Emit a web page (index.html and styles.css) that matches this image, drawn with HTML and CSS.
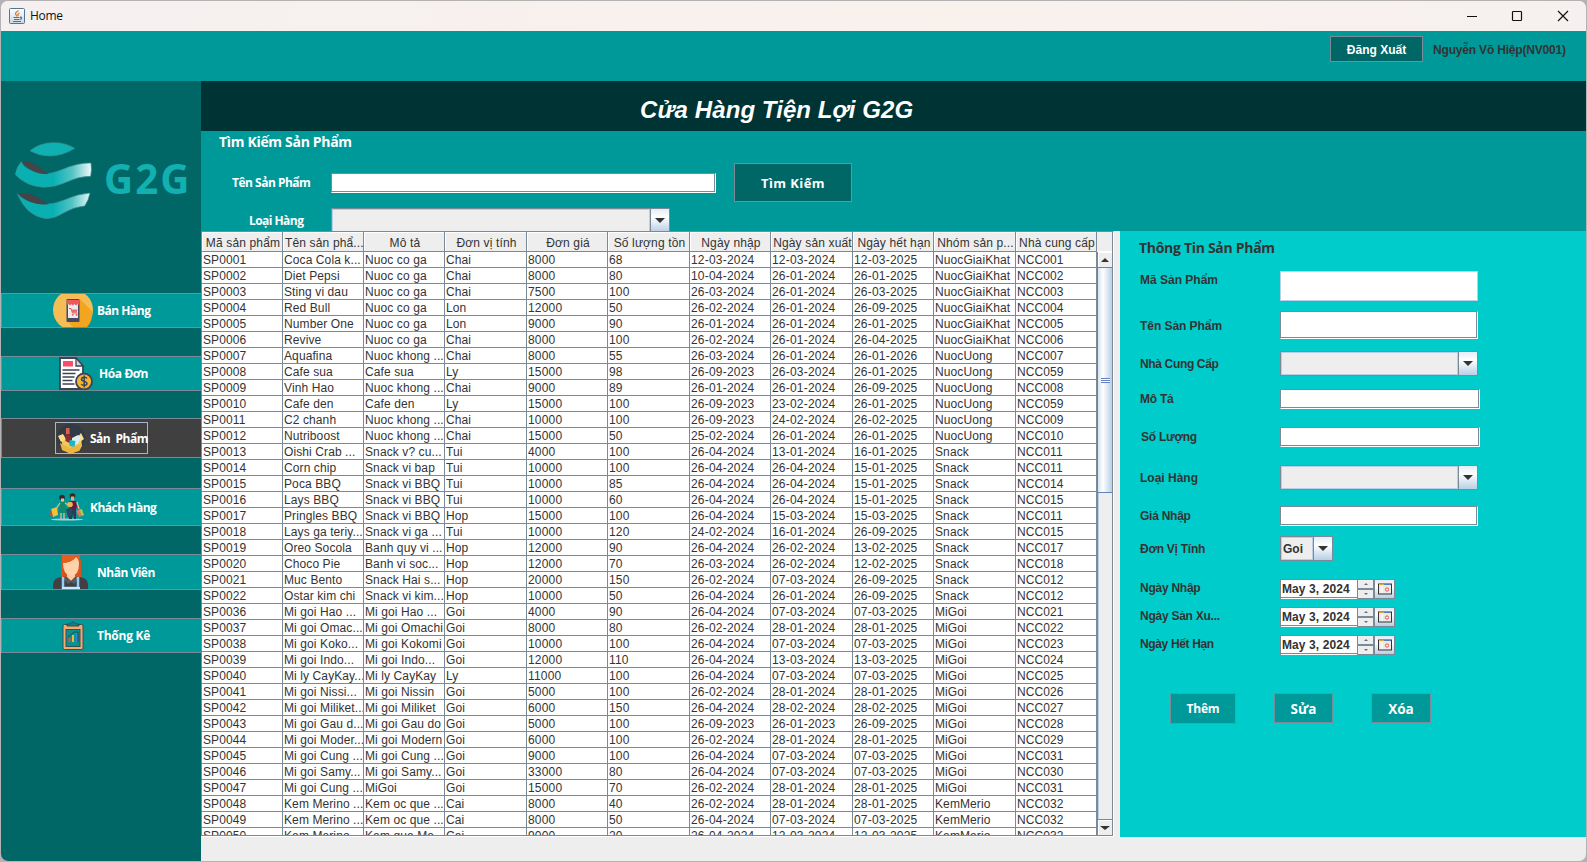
FILE: index.html
```html
<!DOCTYPE html>
<html lang="vi">
<head>
<meta charset="utf-8">
<title>Home</title>
<link rel="stylesheet" href="styles.css">
</head>
<body>
<div class="window">
  <header class="titlebar">
    <svg class="java" width="16" height="16" viewBox="0 0 16 16"><defs><linearGradient id="jv" x2="0" y2="1"><stop offset="0" stop-color="#fff"/><stop offset="1" stop-color="#c9d9e6"/></linearGradient></defs><rect x=".5" y=".5" width="15" height="15" rx="1" fill="url(#jv)" stroke="#55768f"/><path d="M9.5 2.5C5.5 5 6 5.500 8 8.500M10.500 5c-2.500 1.500-2 2-1 3" fill="none" stroke="#e87722" stroke-width="1.300"/><path d="M4.500 9.500h6M5 11.500h5.500M4 13.500h8M11 9.300c2.200-.5 2.200 1.500 0 2" fill="none" stroke="#4f7390" stroke-width="1.200"/></svg>
    <span class="title">Home</span>
    <svg class="winbtns" width="106" height="14" viewBox="0 0 106 14" fill="none" stroke="#111" stroke-width="1"><path d="M1 7.500h10"/><rect x="46.500" y="2.500" width="9" height="9" rx=".8" stroke-width="1.200"/><path d="M92 2l10 10M102 2L92 12" stroke-width="1.200"/></svg>
  </header>
  <div class="topbar">
    <button class="btn logout">Đăng Xuất</button>
    <span class="user">Nguyễn Võ Hiệp(NV001)</span>
  </div>
  <div class="body">
    <nav class="sidebar">
      <svg class="logo" width="177" height="80" viewBox="42 424 531 240">
        <defs>
          <linearGradient id="ga" x1="45" x2="275" y1="0" y2="0" gradientUnits="userSpaceOnUse"><stop offset=".5" stop-color="#08b0b2"/><stop offset=".75" stop-color="#56c4c5"/><stop offset="1" stop-color="#f4fafa"/></linearGradient>
        </defs>
        <g stroke="#3f8f8c" stroke-width="2">
          <path d="M90 453Q120 429 160 429Q198 429 224 446Q190 468 150 469Q117 469 90 453Z" fill="#0fb0b1"/>
          <path d="M64 486Q72 510 125 523Q150 524 185 510Q235 488 273 490Q276 510 272 530Q235 530 200 547Q165 563 130 563Q80 560 46 525Q50 500 64 486Z" fill="url(#ga)"/>
          <path d="M64 485Q90 482 110 497Q126 511 146 522Q125 526 102 515Q78 503 64 485Z" fill="#444548" stroke="none"/>
          <path d="M52 582Q78 609 125 614Q160 615 195 600Q235 582 270 580Q266 602 254 619Q220 622 190 640Q165 657 138 657Q80 650 52 582Z" fill="url(#ga)"/>
          <path d="M52 581Q85 577 108 590Q125 602 146 613Q118 617 92 607Q68 598 52 581Z" fill="#444548" stroke="none"/>
        </g>
        <text class="logotext" x="312" y="582" textLength="256">G2G</text>
      </svg>
      <button class="nav n1">
        <svg width="40" height="33" viewBox="0 0 40 33"><circle cx="20" cy="16" r="20" fill="#f6bd57"/><path d="M27 5L39 17Q40 27 34 33H20L14 27Z" fill="#f4a51f"/><rect x="13.500" y="5" width="13" height="23" rx="1" fill="#47495f"/><rect x="15" y="8" width="10" height="16" fill="#e9ecef"/><path d="M14 6h12v5l-1.500-1-1.500 1.500-1.500-1.500-1.500 1.500-1.500-1.500-1.500 1.500-1.500-1.500-1.500 1z" fill="#f0585a"/><path d="M16 14.500h2l1.500 4.500h5" stroke="#e8505b" fill="none"/><path d="M18.500 15.500h6l-.8 3h-4.500z" fill="#f06a6a"/><circle cx="19.800" cy="20.800" r=".9" fill="#e8505b"/><circle cx="23.500" cy="20.800" r=".9" fill="#e8505b"/></svg>
        <span>Bán Hàng</span></button>
      <button class="nav n2">
        <svg width="36" height="33" viewBox="0 0 36 33"><path d="M2 1h16l7 8v23H2z" fill="#fff" stroke="#3d4356" stroke-width="1.800"/><path d="M18 1v8h7z" fill="#cfd6e0" stroke="#3d4356" stroke-width="1.300"/><rect x="5" y="4" width="10" height="5.500" fill="#fa4d6c"/><path d="M4.500 13h17M4.500 16.500h13M4.500 20h12M4.500 23.500h10M4.500 27h12" stroke="#3d4356" stroke-width="1.500"/><circle cx="26" cy="24.500" r="8" fill="#f6b52e" stroke="#3d4356" stroke-width="1.800"/><path d="M29 21.500c-1-2-5.500-1.500-5.500.8 0 2.700 5.500 1.500 5.500 4.200 0 2.200-4.500 2.700-5.700.5M26.200 18.500v12" fill="none" stroke="#3d4356" stroke-width="1.500"/></svg>
        <span>Hóa Đơn</span></button>
      <button class="nav n3">
        <span class="focus">
        <svg width="28" height="30" viewBox="0 0 28 30"><circle cx="14" cy="14" r="14" fill="#313b47"/><path d="M4 12l5 3 9 2 6-4 1 9-3 5-8 2-8-3z" fill="#f4c660"/><path d="M1 12l5-2 3 5-5 3zM24 9l-4 5 3 4 4-3z" fill="#ffdd83"/><path d="M9 4h3.500v7l2 3v6l-6-3V12z" fill="#8d2c2c"/><path d="M9 4h3.500v6H9z" fill="#d9624c"/><path d="M15 14l6-3 3 2-3 7-6 1z" fill="#d9eef0"/><path d="M12.500 16l6 1-1 6-5-1z" fill="#19b8c6"/><path d="M3 19l10 5 11-4-1 6-9 4-9-4z" fill="#edb540"/></svg>
        <span>Sản&nbsp; Phẩm</span></span></button>
      <button class="nav n4">
        <svg width="36" height="28" viewBox="0 0 36 28"><ellipse cx="17" cy="26.500" rx="16" ry="1" fill="#9fd4d4"/><circle cx="12" cy="4.500" r="2.800" fill="#38252b"/><path d="M11 5.500h3v3h-3z" fill="#f0bda0"/><path d="M10 9h5l.5 5 1.500 6H8l2-6z" fill="#13896b"/><path d="M10 10l-4 6M15 10l3 2M11 20v6M14 20v6" stroke="#edb595" stroke-width="1.300"/><circle cx="22.500" cy="3" r="2.800" fill="#42241e"/><rect x="21" y="3.500" width="3.200" height="4" fill="#e7a984"/><path d="M19 8h7l1 6-2 3h-6z" fill="#6d1647"/><path d="M27 9l2 7" stroke="#edb595" stroke-width="1.300"/><path d="M19 16h7v10h-2l-1-6-1 6h-3z" fill="#243c54"/><path d="M1 16l6-2 1 8-5 2z" fill="#f4c13d"/><path d="M1 16l-1 6 3 2z" fill="#e2493c"/><path d="M16 16l6-1 1 8-5 1z" fill="#244b60"/><path d="M26 18l5-2 3 6-5 2z" fill="#e87361"/><path d="M29 17l3-1 2 6-2 1z" fill="#a8c84a"/><circle cx="20" cy="11.500" r="2.800" fill="#e8b94c"/></svg>
        <span>Khách Hàng</span></button>
      <button class="nav n5">
        <svg width="36" height="34" viewBox="0 0 36 34"><path d="M8 34V7Q8 0 15 0h6q7 0 7 7v15H8z" fill="#d9531e"/><path d="M0 34v-4q0-7 8-8h19q8 1 8 8v4z" fill="#424045"/><path d="M14 16h8v6l-4 4-4-4z" fill="#ffc89a"/><path d="M10 8q10-1 13-6 3 2 3 7 0 11-8 12-8-1-8-13z" fill="#ffd2aa"/><path d="M9 8Q20 8 23 1l4 4V0H9z" fill="#e45f1c"/><path d="M12 21l6 5 6-5 2 3-5 5-3-2-3 2-5-5z" fill="#5a5860"/><path d="M10 22v11h15V22" fill="none" stroke="#8fd0f5" stroke-width="2.500"/><path d="M9 32h18v2H9z" fill="#cdeafa"/></svg>
        <span>Nhân Viên</span></button>
      <button class="nav n6">
        <svg width="22" height="29" viewBox="0 0 22 29"><rect x="1" y="3.500" width="20" height="25" rx="1.500" fill="#f8a868" stroke="#30535b" stroke-width="1"/><rect x="4" y="8.500" width="14" height="17" fill="#0b9090" stroke="#30535b"/><path d="M5 5V3h3q3-4 6 0h3v2z" fill="#17817f" stroke="#24535b"/><path d="M7.500 17v4" stroke="#e2503f" stroke-width="2"/><path d="M11 14v7" stroke="#f6b53d" stroke-width="2"/><path d="M14.500 12v9" stroke="#3784d6" stroke-width="2"/><path d="M6 16l6-5 4 0v10" fill="none" stroke="#24434d" stroke-width=".8"/></svg>
        <span>Thống Kê</span></button>
    </nav>
    <main class="main">
      <h1 class="banner">Cửa Hàng Tiện Lợi G2G</h1>
      <section class="search">
        <h2 class="heading">Tìm Kiếm Sản Phẩm</h2>
        <div class="searchrow">
          <label class="slabel">Tên Sản Phẩm</label>
          <div class="field"></div>
          <button class="btn find">Tìm Kiếm</button>
        </div>
        <div class="searchrow second">
          <label class="slabel slabel2">Loại Hàng</label>
          <div class="combo"><span class="val"></span><span class="drop"><i></i></span></div>
        </div>
      </section>
      <div class="content">
        <div class="tablebox">
          <div class="grid">
            <div class="thead" id="head"></div>
            <div class="tbody" id="rows"></div>
          </div>
          <div class="scroll">
            <div class="corner"></div>
            <div class="sbtn"><i class="up"></i></div>
            <div class="thumb"><i></i></div>
            <div class="track"></div>
            <div class="sbtn last"><i class="down"></i></div>
          </div>
        </div>
        <aside class="panel">
          <h2 class="ptitle">Thông Tin Sản Phẩm</h2>
          <div class="row r1"><label>Mã Sản Phẩm</label><div class="field flat"></div></div>
          <div class="row r2"><label>Tên Sản Phẩm</label><div class="field"></div></div>
          <div class="row r3"><label>Nhà Cung Cấp</label><div class="combo"><span class="val"></span><span class="drop"><i></i></span></div></div>
          <div class="row r4"><label>Mô Tả</label><div class="field wide"></div></div>
          <div class="row r5"><label>Số Lượng</label><div class="field wide"></div></div>
          <div class="row r6"><label>Loại Hàng</label><div class="combo"><span class="val"></span><span class="drop"><i></i></span></div></div>
          <div class="row r7"><label>Giá Nhập</label><div class="field"></div></div>
          <div class="row r8"><label>Đơn Vị Tính</label><div class="combo small"><span class="val">Goi</span><span class="drop"><i></i></span></div></div>
          <div class="row r9"><label>Ngày Nhập</label><div class="date"><span class="dtext">May 3, 2024</span><span class="spin"><b class="up"></b><b class="down"></b></span><span class="cal"><svg width="14" height="12" viewBox="0 0 14 12"><rect x=".5" y="1" width="13" height="10" fill="#eceae4" stroke="#333"/><path d="M1 1.500h5" stroke="#e9a23b"/><path d="M6 1.500h7" stroke="#5b7fb0"/><path d="M4 3v7" stroke="#fff"/><circle cx="9" cy="6.500" r="1.600" fill="#fff" stroke="#e04a4a"/></svg></span></div></div>
          <div class="row r10"><label>Ngày Sản Xu...</label><div class="date"><span class="dtext">May 3, 2024</span><span class="spin"><b class="up"></b><b class="down"></b></span><span class="cal"><svg width="14" height="12" viewBox="0 0 14 12"><rect x=".5" y="1" width="13" height="10" fill="#eceae4" stroke="#333"/><path d="M1 1.500h5" stroke="#e9a23b"/><path d="M6 1.500h7" stroke="#5b7fb0"/><path d="M4 3v7" stroke="#fff"/><circle cx="9" cy="6.500" r="1.600" fill="#fff" stroke="#e04a4a"/></svg></span></div></div>
          <div class="row r11"><label>Ngày Hết Hạn</label><div class="date"><span class="dtext">May 3, 2024</span><span class="spin"><b class="up"></b><b class="down"></b></span><span class="cal"><svg width="14" height="12" viewBox="0 0 14 12"><rect x=".5" y="1" width="13" height="10" fill="#eceae4" stroke="#333"/><path d="M1 1.500h5" stroke="#e9a23b"/><path d="M6 1.500h7" stroke="#5b7fb0"/><path d="M4 3v7" stroke="#fff"/><circle cx="9" cy="6.500" r="1.600" fill="#fff" stroke="#e04a4a"/></svg></span></div></div>
          <div class="actions"><button class="btn add">Thêm</button><button class="btn edit">Sửa</button><button class="btn del">Xóa</button></div>
        </aside>
      </div>
    </main>
  </div>
</div>
<script src="app.js"></script>
</body>
</html>
```
FILE: styles.css
```css
* { box-sizing: border-box; }
body {
  margin: 0;
  padding: 1px;
  width: 1587px;
  height: 862px;
  overflow: hidden;
  background: #b4b2b3;
  font: 12px/16px "Liberation Sans", Arial, sans-serif;
  color: #333;
}
button { font: inherit; color: inherit; padding: 0; margin: 0; }
h1, h2 { margin: 0; }
.window {
  width: 1585px;
  height: 860px;
  border-radius: 7px;
  overflow: hidden;
  background: #eee;
  display: flex;
  flex-direction: column;
}
.titlebar {
  height: 30px;
  flex: none;
  background: linear-gradient(90deg, #f5f0f0, #f9f1ec 60%, #f6f0f0);
  display: flex;
  align-items: center;
  padding: 0 14px 0 8px;
}
.title { font: 12px/16px "Open Sans", sans-serif; letter-spacing: -.3px; color: #111; margin-left: 5px; flex: 1; }
.topbar {
  height: 50px;
  flex: none;
  background: #009999;
  display: flex;
  justify-content: flex-end;
  padding: 5px 20px 0 0;
  gap: 10px;
  font-weight: bold;
}
.btn {
  border: 1px solid #7a8a99;
  background: #006666;
  color: #fff;
  font-weight: bold;
}
.logout { width: 93px; height: 26px; line-height: 26px; }
.user { line-height: 28px; width: 133px; letter-spacing: -.18px; white-space: nowrap; }
.body { flex: 1; display: flex; min-height: 0; }
.sidebar {
  width: 200px;
  flex: none;
  background: #006666;
  padding-top: 60px;
}
.logo { display: block; margin: 0 0 72px 13px; }
.logotext { font: bold 121px "Open Sans", sans-serif; fill: #12b0b0; }
.nav {
  display: flex;
  align-items: center;
  width: 200px;
  border: 1px solid #7a8a99;
  border-right: 0;
  background: #009999;
  color: #fff;
  font: bold 12px/16px "Open Sans", sans-serif;
  letter-spacing: -.5px;
  overflow: hidden;
}
.nav svg { flex: none; }
.nav span { white-space: nowrap; }
.nav > span:not(.focus) { padding-top: 1px; }
.n1 { height: 35px; padding-left: 51px; gap: 4px; }
.n2 { height: 35px; margin-top: 28px; padding-left: 56px; gap: 5px; letter-spacing: -.4px; }
.n3 { height: 40px; margin-top: 27px; padding-left: 53px; background: #404040; }
.n4 { height: 38px; margin-top: 30px; padding-left: 48px; gap: 4px; }
.n4 > span:not(.focus) { padding-top: 2px; }
.n5 { height: 36px; margin-top: 28px; padding-left: 51px; gap: 8px; }
.n6 { height: 35px; margin-top: 28px; padding-left: 60px; gap: 13px; letter-spacing: -.25px; }
.focus {
  display: flex;
  align-items: center;
  gap: 5px;
  width: 93px;
  height: 32px;
  padding: 1px 0 0 1px;
  border: 1px solid #a3b8cc;
}
.main { flex: 1; display: flex; flex-direction: column; min-width: 0; }
.banner {
  height: 50px;
  flex: none;
  background: #003333;
  color: #fff;
  font: italic bold 24px/57px "Liberation Sans", Arial, sans-serif;
  letter-spacing: .08px;
  padding-left: 439px;
}
.search { height: 100px; flex: none; background: #009999; color: #fff; overflow: hidden; }
.heading { font: bold 14px/20px "Open Sans", sans-serif; letter-spacing: -.32px; padding: 1px 0 0 18px; }
.searchrow { display: flex; align-items: center; height: 39px; margin-top: 11px; }
.second { height: 25px; margin-top: 6px; }
.slabel { width: 130px; padding: 1px 0 0 31px; font: bold 12px/16px "Open Sans", sans-serif; letter-spacing: -.55px; white-space: nowrap; }
.searchrow:not(.second) .slabel { letter-spacing: -.5px; }
.slabel2 { padding: 1px 0 0 48px; }
.search .field { width: 385px; }
.search .combo { width: 339px; }
.find { width: 118px; height: 39px; margin-left: 18px; font: bold 13px/16px "Open Sans", sans-serif; letter-spacing: .4px; }
.field {
  width: 198px;
  height: 20px;
  background: #fff;
  border: 1px solid;
  border-color: #7a8a99 #fff #fff #7a8a99;
  box-shadow: inset -1px -1px 0 #7a8a99;
}
.field.flat { height: 30px; border-color: #b8cfe5; box-shadow: none; }
.field.wide { width: 200px; }
.combo { width: 198px; height: 25px; display: flex; border: 1px solid #7a8a99; font-weight: bold; }
.val { flex: 1; background: #eee; border: 1px solid #b8cfe5; padding-left: 1px; line-height: 22px; }
.drop {
  width: 19px;
  border-left: 1px solid #7a8a99;
  background: linear-gradient(#e4edf6, #fff 35%, #b8cfe5);
  display: flex;
  align-items: center;
  justify-content: center;
}
.drop i { border: 5px solid transparent; border-top-color: #333; border-bottom: 0; }
.content { flex: 1; display: flex; align-items: flex-start; }
.tablebox {
  display: flex;
  width: 913px;
  height: 605px;
  border: 1px solid #7a8a99;
  border-bottom: 0;
  border-right-color: #fff;
  box-shadow: 0 1px 0 #fff;
}
.grid { width: 895px; height: 604px; overflow: hidden; border-bottom: 1px solid #7a8a99; }
.thead, .tr { display: grid; grid-template-columns: 81px 81px 81px 82px 81px 82px 81px 82px 81px 82px 81px; }
.th {
  height: 20px;
  background: #eee;
  border-right: 1px solid #7a8a99;
  border-bottom: 1px solid #7a8a99;
  box-shadow: inset 1px 1px 0 #fff;
  text-align: center;
  padding-left: 2px;
  line-height: 23px;
  letter-spacing: .15px;
  white-space: nowrap;
  overflow: hidden;
}
.td {
  height: 16px;
  background: #fff;
  border-right: 1px solid #7a8a99;
  border-bottom: 1px solid #7a8a99;
  padding-left: 1px;
  line-height: 16px;
  letter-spacing: .1px;
  white-space: nowrap;
  overflow: hidden;
}
.num { letter-spacing: .2px; }
.scroll { width: 16px; display: flex; flex-direction: column; border-right: 1px solid #7a8a99; background: #eee; }
.corner { height: 20px; border-bottom: 1px solid #fff; }
.sbtn { height: 15px; display: flex; align-items: center; justify-content: center; border-left: 1px solid #7a8a99; box-shadow: inset 1px 1px 0 #fff; }
.sbtn.last { height: 17px; border-top: 1px solid #7a8a99; border-bottom: 1px solid #7a8a99; }
i.up { border: 4px solid transparent; border-bottom-color: #333; border-top: 0; }
i.down { border: 5px solid transparent; border-top: 4px solid #333; border-bottom: 0; }
.thumb {
  height: 226px;
  border: 1px solid #6382bf;
  border-right: 0;
  background: linear-gradient(90deg, #d4e2f0, #fff 35%, #b8cfe5);
  display: flex;
  align-items: center;
  justify-content: center;
}
.thumb i { width: 9px; height: 5px; background: linear-gradient(#6382bf 1px, #fff 1px 2px, #6382bf 2px 3px, #fff 3px 4px, #6382bf 4px); }
.track { flex: 1; border-left: 1px solid #7a8a99; box-shadow: inset 1px 0 0 #b8cfe5; }
.panel { width: 466px; height: 606px; margin-left: 6px; background: #00cccc; }
.ptitle { font: bold 14px/20px "Open Sans", sans-serif; letter-spacing: -.3px; padding: 7px 0 0 19px; height: 40px; }
.row { display: flex; align-items: center; padding-left: 20px; font-weight: bold; }
.row label { width: 140px; flex: none; white-space: nowrap; letter-spacing: -.25px; }
.r1 label { padding-bottom: 12px; letter-spacing: 0; }
.r2 { margin-top: 10px; }
.r2 label { padding-top: 1px; letter-spacing: -.05px; }
.r2 .field { height: 28px; }
.r3 { margin-top: 12px; }
.r3 label, .r11 label { letter-spacing: -.35px; }
.r4 { margin-top: 13px; }
.r5 { margin-top: 18px; }
.r5 label { padding: 0 0 1px 1px; }
.r6 { margin-top: 18px; }
.r6 label { letter-spacing: 0; }
.r7 { margin-top: 16px; }
.r8 { margin-top: 10px; }
.r9 { margin-top: 18px; }
.r10, .r11 { margin-top: 8px; }
.r9 label, .r10 label, .r11 label { padding-bottom: 2px; }
.small { width: 53px; }
.date { width: 115px; height: 20px; display: flex; border: 1px solid #7a8a99; border-bottom: 0; }
.dtext { width: 76px; background: #fff; padding-left: 1px; line-height: 19px; letter-spacing: .1px; box-shadow: inset 0 -1px 0 #fff, inset 0 -2px 0 #7a8a99; white-space: nowrap; }
.spin { width: 17px; display: flex; flex-direction: column; border: solid #7a8a99; border-width: 0 1px 1px; background: #eee; }
.spin b { flex: 1; display: flex; align-items: center; justify-content: center; }
.spin b.up { border-bottom: 2px solid #7a8a99; }
.spin b::after { content: ""; border: 2px solid transparent; }
.spin .up::after { border-bottom-color: #666f7a; border-top: 0; }
.spin .down::after { border-top-color: #666f7a; border-bottom: 0; }
.cal { flex: 1; display: flex; align-items: center; justify-content: center; border-left: 1px solid #7a8a99; border-bottom: 1px solid #7a8a99; background: linear-gradient(#dfe9f3, #fff 35%, #b8cfe5); }
.actions { display: flex; align-items: flex-start; margin-top: 38px; padding-left: 50px; }
.actions .btn { background: #009999; height: 30px; padding-top: 1px; font: bold 13.500px/16px "Open Sans", sans-serif; }
.actions .add { width: 66px; height: 31px; font-size: 12px; letter-spacing: -.2px; }
.edit { width: 59px; margin-left: 38px; }
.del { width: 60px; margin-left: 38px; }
```
FILE: app.js
```js
const heads = ["Mã sản phẩm", "Tên sản phẩ...", "Mô tả", "Đơn vị tính", "Đơn giá", "Số lượng tồn", "Ngày nhập", "Ngày sản xuất", "Ngày hết hạn", "Nhóm sản p...", "Nhà cung cấp"];

const products = `SP0001|Coca Cola k...|Nuoc co ga|Chai|8000|68|12-03-2024|12-03-2024|12-03-2025|NuocGiaiKhat|NCC001
SP0002|Diet Pepsi|Nuoc co ga|Chai|8000|80|10-04-2024|26-01-2024|26-01-2025|NuocGiaiKhat|NCC002
SP0003|Sting vi dau|Nuoc co ga|Chai|7500|100|26-03-2024|26-01-2024|26-03-2025|NuocGiaiKhat|NCC003
SP0004|Red Bull|Nuoc co ga|Lon|12000|50|26-02-2024|26-01-2024|26-09-2025|NuocGiaiKhat|NCC004
SP0005|Number One|Nuoc co ga|Lon|9000|90|26-01-2024|26-01-2024|26-01-2025|NuocGiaiKhat|NCC005
SP0006|Revive|Nuoc co ga|Chai|8000|100|26-02-2024|26-01-2024|26-04-2025|NuocGiaiKhat|NCC006
SP0007|Aquafina|Nuoc khong ...|Chai|8000|55|26-03-2024|26-01-2024|26-01-2026|NuocUong|NCC007
SP0008|Cafe sua|Cafe sua|Ly|15000|98|26-09-2023|26-03-2024|26-01-2025|NuocUong|NCC059
SP0009|Vinh Hao|Nuoc khong ...|Chai|9000|89|26-01-2024|26-01-2024|26-09-2025|NuocUong|NCC008
SP0010|Cafe den|Cafe den|Ly|15000|100|26-09-2023|23-02-2024|26-01-2025|NuocUong|NCC059
SP0011|C2 chanh|Nuoc khong ...|Chai|10000|100|26-09-2023|24-02-2024|26-02-2025|NuocUong|NCC009
SP0012|Nutriboost|Nuoc khong ...|Chai|15000|50|25-02-2024|26-01-2024|26-01-2025|NuocUong|NCC010
SP0013|Oishi Crab ...|Snack v? cu...|Tui|4000|100|26-04-2024|13-01-2024|16-01-2025|Snack|NCC011
SP0014|Corn chip|Snack vi bap|Tui|10000|100|26-04-2024|26-04-2024|15-01-2025|Snack|NCC011
SP0015|Poca BBQ|Snack vi BBQ|Tui|10000|85|26-04-2024|26-04-2024|15-01-2025|Snack|NCC014
SP0016|Lays BBQ|Snack vi BBQ|Tui|10000|60|26-04-2024|26-04-2024|15-01-2025|Snack|NCC015
SP0017|Pringles BBQ|Snack vi BBQ|Hop|15000|100|26-04-2024|15-03-2024|15-03-2025|Snack|NCC011
SP0018|Lays ga teriy...|Snack vi ga ...|Tui|10000|120|24-02-2024|16-01-2024|26-09-2025|Snack|NCC015
SP0019|Oreo Socola|Banh quy vi ...|Hop|12000|90|26-04-2024|26-02-2024|13-02-2025|Snack|NCC017
SP0020|Choco Pie|Banh vi soc...|Hop|12000|70|26-03-2024|26-02-2024|12-02-2025|Snack|NCC018
SP0021|Muc Bento|Snack Hai s...|Hop|20000|150|26-02-2024|07-03-2024|26-09-2025|Snack|NCC012
SP0022|Ostar kim chi|Snack vi kim...|Hop|10000|50|26-04-2024|26-01-2024|26-09-2025|Snack|NCC012
SP0036|Mi goi Hao ...|Mi goi Hao ...|Goi|4000|90|26-04-2024|07-03-2024|07-03-2025|MiGoi|NCC021
SP0037|Mi goi Omac...|Mi goi Omachi|Goi|8000|80|26-02-2024|28-01-2024|28-01-2025|MiGoi|NCC022
SP0038|Mi goi Koko...|Mi goi Kokomi|Goi|10000|100|26-04-2024|07-03-2024|07-03-2025|MiGoi|NCC023
SP0039|Mi goi Indo...|Mi goi Indo...|Goi|12000|110|26-04-2024|13-03-2024|13-03-2025|MiGoi|NCC024
SP0040|Mi ly CayKay...|Mi ly CayKay|Ly|11000|100|26-04-2024|07-03-2024|07-03-2025|MiGoi|NCC025
SP0041|Mi goi Nissi...|Mi goi Nissin|Goi|5000|100|26-02-2024|28-01-2024|28-01-2025|MiGoi|NCC026
SP0042|Mi goi Miliket...|Mi goi Miliket|Goi|6000|150|26-04-2024|28-02-2024|28-02-2025|MiGoi|NCC027
SP0043|Mi goi Gau d...|Mi goi Gau do|Goi|5000|100|26-09-2023|26-01-2023|26-09-2025|MiGoi|NCC028
SP0044|Mi goi Moder...|Mi goi Modern|Goi|6000|100|26-02-2024|28-01-2024|28-01-2025|MiGoi|NCC029
SP0045|Mi goi Cung ...|Mi goi Cung ...|Goi|9000|100|26-04-2024|07-03-2024|07-03-2025|MiGoi|NCC031
SP0046|Mi goi Samy...|Mi goi Samy...|Goi|33000|80|26-04-2024|07-03-2024|07-03-2025|MiGoi|NCC030
SP0047|Mi goi Cung ...|MiGoi|Goi|15000|70|26-02-2024|28-01-2024|28-01-2025|MiGoi|NCC031
SP0048|Kem Merino ...|Kem oc que ...|Cai|8000|40|26-02-2024|28-01-2024|28-01-2025|KemMerio|NCC032
SP0049|Kem Merino ...|Kem oc que ...|Cai|8000|50|26-04-2024|07-03-2024|07-03-2025|KemMerio|NCC032
SP0050|Kem Merino ...|Kem que Me...|Cai|9000|20|26-04-2024|12-03-2024|12-03-2025|KemMerio|NCC032`;

document.getElementById("head").innerHTML = heads.map(h => `<div class="th">${h}</div>`).join("");
document.getElementById("rows").innerHTML = products.split("\n").map(line =>
  `<div class="tr">${line.split("|").map((c, i) => `<div class="td${i >= 4 && i <= 8 ? " num" : ""}">${c}</div>`).join("")}</div>`
).join("");
```
